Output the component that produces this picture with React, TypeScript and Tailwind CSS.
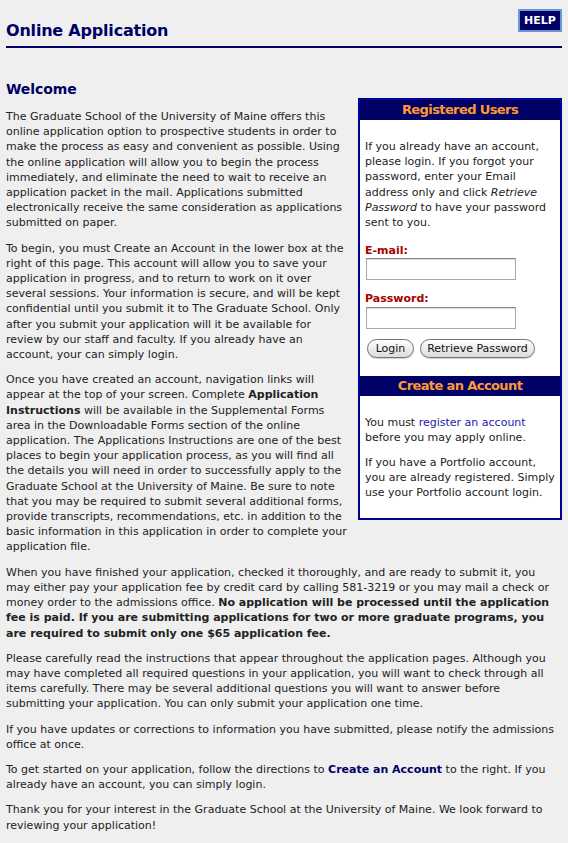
import React from "react";

const font = { fontFamily: '"DejaVu Sans", Verdana, sans-serif' };

function P({ children, className = "" }: { children: React.ReactNode; className?: string }) {
  return <p className={`mb-[10px] leading-[15.2px] ${className}`}>{children}</p>;
}

export default function App() {
  return (
    <div className="min-h-[843px] bg-[#efefef] px-[6px] text-[11px] text-[#222]" style={font}>
      <div className="flex items-start justify-between border-b-2 border-[#000066] pb-[5px] pt-[9px]">
        <h1 className="mt-[12px] text-[16px] font-bold leading-[20px] tracking-[-0.2px] text-[#000066]">Online Application</h1>
        <button className="flex h-[23px] w-[44px] items-center justify-center border-2 border-[#6699cc] bg-[#000066] text-[11px] font-bold leading-none text-white">
          HELP
        </button>
      </div>

      <h2 className="mt-[33px] text-[14px] font-bold leading-[17px] tracking-[-0.1px] text-[#000066]">Welcome</h2>

      <div className="flex items-start gap-[8px]">
        <div className="flex-1 pt-[11px]">
          <P>
            The Graduate School of the University of Maine offers this online application option to prospective
            students in order to make the process as easy and convenient as possible. Using the online application
            will allow you to begin the process immediately, and eliminate the need to wait to receive an application
            packet in the mail. Applications submitted electronically receive the same consideration as applications
            submitted on paper.
          </P>
          <P>
            To begin, you must Create an Account in the lower box at the right of this page. This account will allow
            you to save your application in progress, and to return to work on it over several sessions. Your
            information is secure, and will be kept confidential until you submit it to The Graduate School. Only
            after you submit your application will it be available for review by our staff and faculty. If you
            already have an account, your can simply login.
          </P>
          <P>
            Once you have created an account, navigation links will appear at the top of your screen. Complete{" "}
            <b>Application Instructions</b> will be available in the Supplemental Forms area in the Downloadable Forms
            section of the online application. The Applications Instructions are one of the best places to begin your
            application process, as you will find all the details you will need in order to successfully apply to the
            Graduate School at the University of Maine. Be sure to note that you may be required to submit several
            additional forms, provide transcripts, recommendations, etc. in addition to the basic information in this
            application in order to complete your application file.
          </P>
        </div>

        <div className="w-[204px] shrink-0 border-2 border-[#000099] bg-white">
          <div className="flex h-[20px] items-center justify-center bg-[#000066] text-[13px] font-bold tracking-[-0.6px] text-[#ff9933]">
            Registered Users
          </div>
          <div className="px-[5px] pt-[19px]">
            <p className="leading-[15.2px]">
              If you already have an account, please login. If you forgot your password, enter your Email address only
              and click <i>Retrieve Password</i> to have your password sent to you.
            </p>
            <div className="mt-[13px] font-bold leading-[15.2px] text-[#aa0000]">E-mail:</div>
            <input
              type="text"
              className="ml-[1px] block h-[22px] w-[150px] border border-[#aaa] border-t-[#888] bg-white shadow-[inset_0_1px_1px_rgba(0,0,0,0.15)]"
            />
            <div className="mt-[11px] font-bold leading-[15.2px] text-[#aa0000]">Password:</div>
            <input
              type="password"
              className="ml-[1px] block h-[22px] w-[150px] border border-[#aaa] border-t-[#888] bg-white shadow-[inset_0_1px_1px_rgba(0,0,0,0.15)]"
            />
            <div className="mt-[10px] flex gap-[6px] pb-[18px] pl-[2px]">
              <button className="h-[19px] w-[47px] rounded-full border border-[#777] bg-gradient-to-b from-white to-[#dcdcdc] text-[11px] leading-none text-[#111] shadow-[0_1px_1px_rgba(0,0,0,0.2)]">
                Login
              </button>
              <button className="h-[19px] w-[115px] rounded-full border border-[#777] bg-gradient-to-b from-white to-[#dcdcdc] text-[11px] leading-none text-[#111] shadow-[0_1px_1px_rgba(0,0,0,0.2)]">
                Retrieve Password
              </button>
            </div>
          </div>
          <div className="flex h-[20px] items-center justify-center bg-[#000066] text-[13px] font-bold tracking-[-0.6px] text-[#ff9933]">
            Create an Account
          </div>
          <div className="px-[5px] pb-[17px] pt-[19px]">
            <p className="mb-[10px] leading-[15.2px]">
              You must <a className="text-[#2222aa]">register an account</a> before you may apply online.
            </p>
            <p className="leading-[15.2px]">
              If you have a Portfolio account, you are already registered. Simply use your Portfolio account login.
            </p>
          </div>
        </div>
      </div>

      <P>
        When you have finished your application, checked it thoroughly, and are ready to submit it, you may either pay
        your application fee by credit card by calling 581-3219 or you may mail a check or money order to the
        admissions office.{" "}
        <b>
          No application will be processed until the application fee is paid. If you are submitting applications for
          two or more graduate programs, you are required to submit only one $65 application fee.
        </b>
      </P>
      <P>
        Please carefully read the instructions that appear throughout the application pages. Although you may have
        completed all required questions in your application, you will want to check through all items carefully.
        There may be several additional questions you will want to answer before submitting your application. You can
        only submit your application one time.
      </P>
      <P>
        If you have updates or corrections to information you have submitted, please notify the admissions office at
        once.
      </P>
      <P>
        To get started on your application, follow the directions to{" "}
        <b className="text-[#000066]">Create an Account</b> to the right. If you already have an account, you can
        simply login.
      </P>
      <P className="mb-0">
        Thank you for your interest in the Graduate School at the University of Maine. We look forward to reviewing
        your application!
      </P>
    </div>
  );
}
